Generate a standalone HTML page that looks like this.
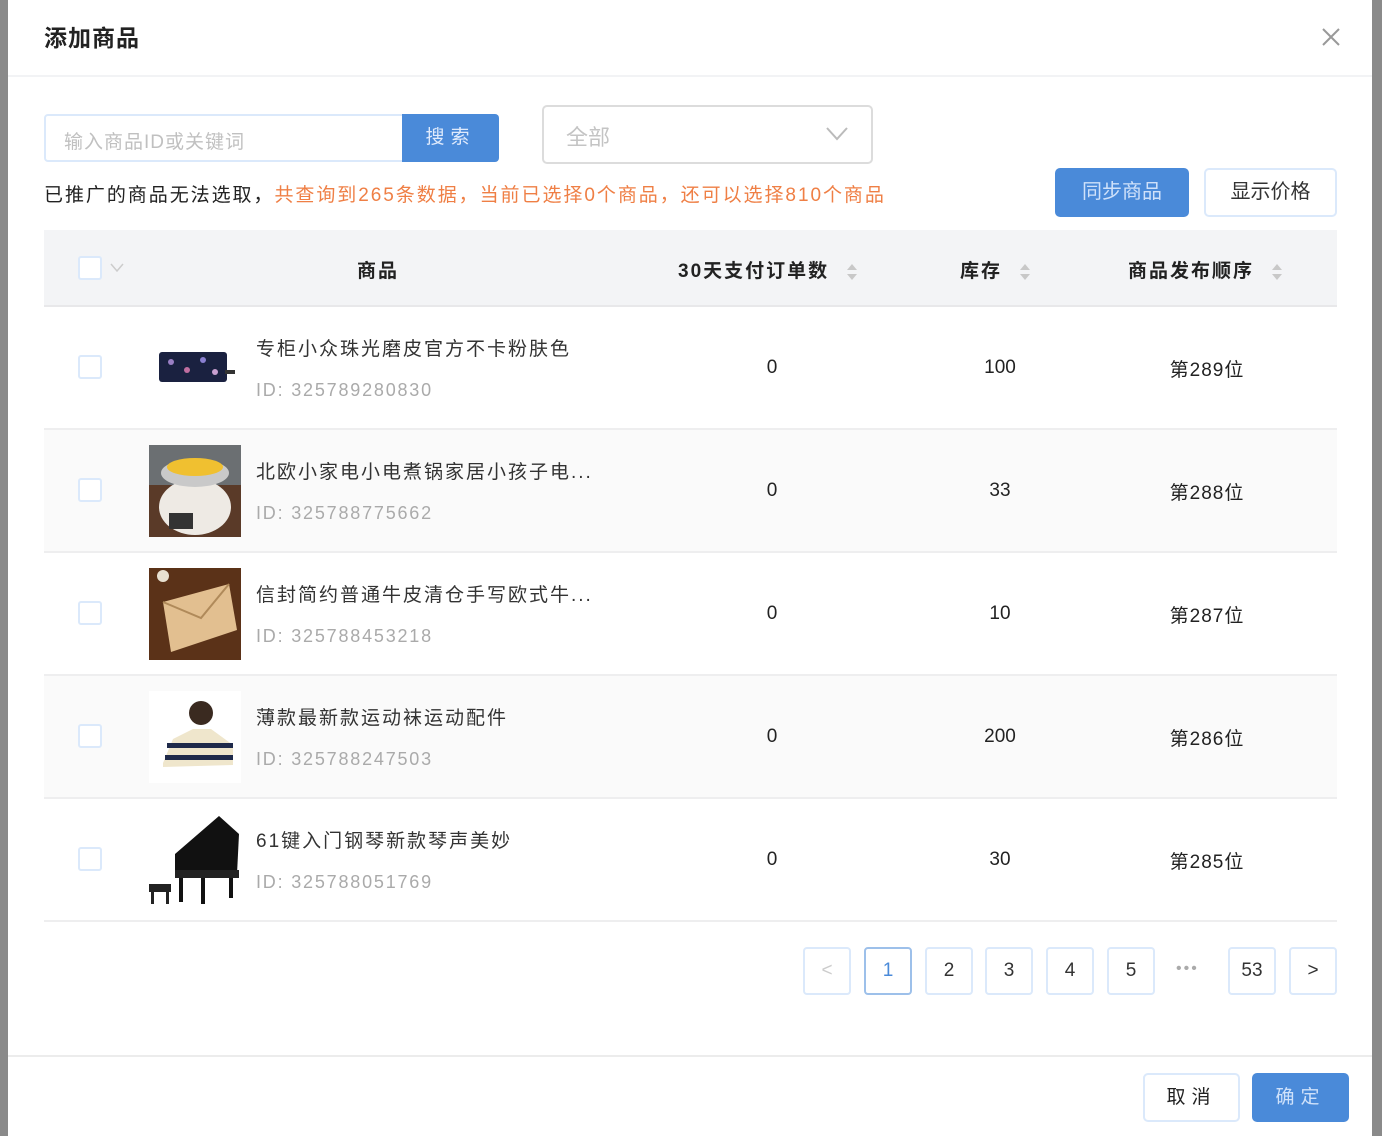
<!DOCTYPE html>
<html><head><meta charset="utf-8"><style>
*{margin:0;padding:0;box-sizing:border-box}
body{width:1382px;height:1136px;position:relative;overflow:hidden;background:#fff;font-family:"Liberation Sans","Noto Sans CJK SC",sans-serif;color:#222}
.a{position:absolute}
.cb{position:absolute;left:78px;width:24px;height:24px;border:2px solid #dbe9fb;border-radius:3px;background:#fff}
.row{position:absolute;left:44px;width:1293px;height:123px;border-bottom:2px solid #eeeeef}
.t{position:absolute;left:212px;font-size:19px;color:#333;white-space:nowrap;letter-spacing:2px}
.id{position:absolute;left:212px;font-size:18px;color:#aaa;letter-spacing:1.8px}
.n{position:absolute;font-size:19px;color:#222;text-align:center;width:120px}
.r{letter-spacing:1px}
.pg{position:absolute;top:947px;width:48px;height:48px;border:2px solid #dbe9fb;border-radius:4px;text-align:center;line-height:44px;font-size:19px;color:#333;background:#fff}
.sort{display:inline-block;vertical-align:middle;margin-left:18px;width:10px;height:18px;position:relative}
.sort:before{content:"";position:absolute;top:1px;left:0;border:5px solid transparent;border-bottom:6px solid #c8c8c8;border-top:0}
.sort:after{content:"";position:absolute;bottom:1px;left:0;border:5px solid transparent;border-top:6px solid #c8c8c8;border-bottom:0}
.h{position:absolute;top:256px;font-size:19px;font-weight:bold;letter-spacing:2px}
</style></head><body>
<div class="a" style="left:0;top:0;width:8px;height:1136px;background:#8a8a8a"></div>
<div class="a" style="left:1372px;top:0;width:10px;height:1136px;background:#8a8a8a"></div>
<div class="a" style="left:44px;top:19px;font-size:23px;font-weight:bold;color:#222;letter-spacing:1px">添加商品</div>
<svg class="a" style="left:1321px;top:27px" width="20" height="20"><path d="M2 2L18 18M18 2L2 18" stroke="#999" stroke-width="2"/></svg>
<div class="a" style="left:8px;top:75px;width:1364px;height:2px;background:#f2f3f5"></div>

<div class="a" style="left:44px;top:114px;width:360px;height:48px;border:2px solid #dbe9fb;border-radius:4px 0 0 4px;font-size:19px;color:#c0c0c0;padding:11px 0 0 18px;letter-spacing:1px">输入商品ID或关键词</div>
<div class="a" style="left:402px;top:114px;width:97px;height:48px;background:#4a8ad9;border-radius:0 4px 4px 0;color:#dfeafc;font-size:19px;text-align:center;line-height:48px;letter-spacing:6px">搜索</div>
<div class="a" style="left:542px;top:105px;width:331px;height:59px;border:2px solid #dcdcdc;border-radius:5px;font-size:22px;color:#c4c4c4;padding:13px 0 0 22px">全部</div>
<svg class="a" style="left:826px;top:127px" width="22" height="14"><path d="M1 1L11 12L21 1" stroke="#bbb" stroke-width="2" fill="none"/></svg>

<div class="a" style="left:44px;top:180px;font-size:19px;white-space:nowrap;letter-spacing:1.95px">已推广的商品无法选取，<span style="color:#ef7f45">共查询到265条数据，当前已选择0个商品，还可以选择810个商品</span></div>
<div class="a" style="left:1055px;top:168px;width:134px;height:49px;background:#4a8ad9;border-radius:5px;color:#cfe1fa;font-size:20px;text-align:center;line-height:49px">同步商品</div>
<div class="a" style="left:1204px;top:168px;width:133px;height:49px;border:2px solid #dbe9fb;border-radius:5px;color:#333;font-size:20px;text-align:center;line-height:45px">显示价格</div>

<div class="a" style="left:44px;top:230px;width:1293px;height:77px;background:#f3f4f6;border-bottom:2px solid #e8e8ea"></div>
<div class="cb" style="top:256px"></div>
<svg class="a" style="left:110px;top:263px" width="14" height="10"><path d="M1 1L7 8L13 1" stroke="#ccc" stroke-width="1.5" fill="none"/></svg>
<div class="h" style="left:357px">商品</div>
<div class="h" style="left:678px">30天支付订单数<span class="sort"></span></div>
<div class="h" style="left:960px">库存<span class="sort"></span></div>
<div class="h" style="left:1128px">商品发布顺序<span class="sort"></span></div>

<div class="row" style="top:307px;background:#fff">
<svg class="a" style="left:113px;top:43px" width="78" height="36"><rect x="2" y="2" width="68" height="30" rx="3" fill="#1a2140"/><circle cx="14" cy="12" r="3" fill="#9a7fc4"/><circle cx="30" cy="20" r="3" fill="#c06ea0"/><circle cx="46" cy="10" r="3" fill="#8a7fd0"/><circle cx="58" cy="22" r="3" fill="#c9a0d0"/><rect x="68" y="20" width="10" height="4" fill="#333"/></svg>
<div class="t" style="top:27px">专柜小众珠光磨皮官方不卡粉肤色</div>
<div class="id" style="top:73px">ID: 325789280830</div>
</div>
<div class="row" style="top:430px;background:#fafafa">
<svg class="a" style="left:105px;top:15px" width="92" height="92"><rect width="92" height="92" fill="#5a3a28"/><rect y="0" width="92" height="40" fill="#6b6f72"/><ellipse cx="46" cy="62" rx="36" ry="28" fill="#eeeae4"/><ellipse cx="46" cy="28" rx="34" ry="14" fill="#c9c9c9"/><ellipse cx="46" cy="22" rx="28" ry="9" fill="#f0c030"/><rect x="20" y="68" width="24" height="16" fill="#333"/></svg>
<div class="t" style="top:27px">北欧小家电小电煮锅家居小孩子电...</div>
<div class="id" style="top:73px">ID: 325788775662</div>
</div>
<div class="row" style="top:553px;background:#fff">
<svg class="a" style="left:105px;top:15px" width="92" height="92"><rect width="92" height="92" fill="#5b3218"/><polygon points="14,34 80,16 88,62 22,84" fill="#e2bf90"/><polyline points="14,34 52,50 80,16" stroke="#b08a5a" stroke-width="2" fill="none"/><circle cx="14" cy="8" r="6" fill="#e8e0d0"/></svg>
<div class="t" style="top:27px">信封简约普通牛皮清仓手写欧式牛...</div>
<div class="id" style="top:73px">ID: 325788453218</div>
</div>
<div class="row" style="top:676px;background:#fafafa">
<svg class="a" style="left:105px;top:15px" width="92" height="92"><rect width="92" height="92" fill="#fff"/><circle cx="52" cy="22" r="12" fill="#3a2a20"/><path d="M14 72L24 48L44 38L62 38L84 54L84 74L14 76Z" fill="#efe6cc"/><rect x="18" y="52" width="66" height="5" fill="#1f2a4a"/><rect x="16" y="64" width="68" height="5" fill="#1f2a4a"/></svg>
<div class="t" style="top:27px">薄款最新款运动袜运动配件</div>
<div class="id" style="top:73px">ID: 325788247503</div>
</div>
<div class="row" style="top:799px;background:#fff">
<svg class="a" style="left:105px;top:15px" width="92" height="92"><rect width="92" height="92" fill="#fff"/><path d="M26 40L70 2L90 20L88 60L26 60Z" fill="#111"/><rect x="26" y="56" width="64" height="8" fill="#222"/><rect x="30" y="64" width="4" height="24" fill="#111"/><rect x="80" y="64" width="4" height="20" fill="#111"/><rect x="52" y="64" width="4" height="26" fill="#111"/><rect x="0" y="70" width="22" height="8" fill="#222"/><rect x="2" y="78" width="3" height="12" fill="#222"/><rect x="17" y="78" width="3" height="12" fill="#222"/></svg>
<div class="t" style="top:27px">61键入门钢琴新款琴声美妙</div>
<div class="id" style="top:73px">ID: 325788051769</div>
</div>

<div class="cb" style="top:355px"></div>
<div class="cb" style="top:478px"></div>
<div class="cb" style="top:601px"></div>
<div class="cb" style="top:724px"></div>
<div class="cb" style="top:847px"></div>

<div class="n" style="left:712px;top:357px">0</div><div class="n" style="left:940px;top:357px">100</div><div class="n r" style="left:1147px;top:355px">第289位</div>
<div class="n" style="left:712px;top:480px">0</div><div class="n" style="left:940px;top:480px">33</div><div class="n r" style="left:1147px;top:478px">第288位</div>
<div class="n" style="left:712px;top:603px">0</div><div class="n" style="left:940px;top:603px">10</div><div class="n r" style="left:1147px;top:601px">第287位</div>
<div class="n" style="left:712px;top:726px">0</div><div class="n" style="left:940px;top:726px">200</div><div class="n r" style="left:1147px;top:724px">第286位</div>
<div class="n" style="left:712px;top:849px">0</div><div class="n" style="left:940px;top:849px">30</div><div class="n r" style="left:1147px;top:847px">第285位</div>

<div class="pg" style="left:803px;color:#ccc">&lt;</div>
<div class="pg" style="left:864px;border-color:#9dc0ea;color:#4a8ad9">1</div>
<div class="pg" style="left:925px">2</div>
<div class="pg" style="left:985px">3</div>
<div class="pg" style="left:1046px">4</div>
<div class="pg" style="left:1107px">5</div>
<div class="a" style="left:1176px;top:960px;font-size:16px;color:#aaa;letter-spacing:2px">•••</div>
<div class="pg" style="left:1228px">53</div>
<div class="pg" style="left:1289px">&gt;</div>

<div class="a" style="left:8px;top:1055px;width:1364px;height:2px;background:#ececec"></div>
<div class="a" style="left:1143px;top:1073px;width:97px;height:49px;border:2px solid #dbe9fb;border-radius:5px;text-align:center;line-height:45px;font-size:19px;letter-spacing:6px">取消</div>
<div class="a" style="left:1252px;top:1073px;width:97px;height:49px;background:#4a8ad9;border-radius:5px;text-align:center;line-height:49px;font-size:19px;letter-spacing:6px;color:#cfe1fa">确定</div>
</body></html>
